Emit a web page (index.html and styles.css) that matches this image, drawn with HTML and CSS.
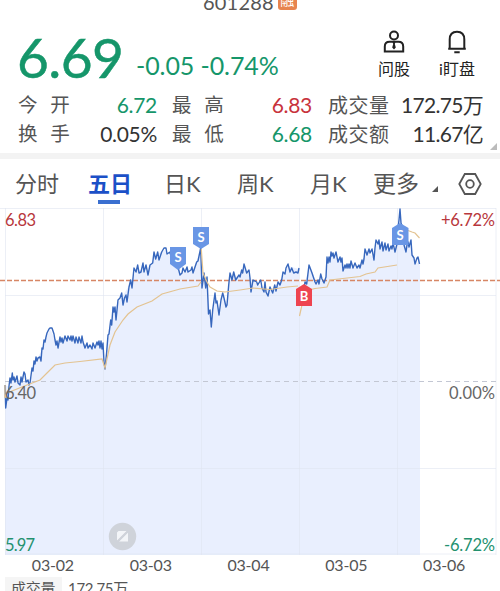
FILE: index.html
```
<!doctype html>
<html lang="zh-CN">
	<head>
		<title>601288</title>
		<meta charset="utf-8"/>
		<link rel="stylesheet" href="styles.css">
	</head>
	<body>

		<header class="code"><span>601288</span><i class="tag">融</i></header>

		<section class="summary">
			<span class="price">6.69</span>
			<span class="change">-0.05 -0.74%</span>
			<div class="action ask">
				<svg width="24" height="24" viewBox="0 0 24 24">
					<circle cx="12" cy="5.5" r="4"/>
					<path d="M2.8 21.5V16.5Q2.8 11.8 7.5 11.8H16.5Q21.2 11.8 21.2 16.5V21.5Z"/>
					<path class="solid" d="M10.5 12H13.5L12.8 14L13.8 17.5L12 19.5L10.2 17.5L11.2 14Z"/>
				</svg>
				<span>问股</span>
			</div>
			<div class="action watch">
				<svg width="24" height="24" viewBox="0 0 24 24">
					<path d="M4.7 18.8V9.5Q4.7 1.7 12 1.7T19.3 9.5V18.8M3.2 18.8H20.8M9.3 22.3H14.7"/>
				</svg>
				<span>i盯盘</span>
			</div>
		</section>

		<section class="quotes">
			<span>今&nbsp;开</span><b class="down">6.72</b>
			<span>最&nbsp;高</span><b class="up">6.83</b>
			<span class="tight">成交量</span><b>172.75万</b>
			<span>换&nbsp;手</span><b>0.05%</b>
			<span>最&nbsp;低</span><b class="down">6.68</b>
			<span class="tight">成交额</span><b>11.67亿</b>
			<i class="corner"></i>
		</section>

		<nav class="tabs">
			<span>分时</span>
			<span class="active">五日</span>
			<span>日K</span>
			<span>周K</span>
			<span>月K</span>
			<span>更多</span>
			<i class="corner"></i>
			<svg width="24" height="24" viewBox="0 0 24 24">
				<path d="M6.8 2H17.2L22.7 12L17.2 22H6.8L1.3 12Z"/>
				<circle cx="12" cy="12" r="3.8"/>
			</svg>
		</nav>

		<!-- y axis starts at 208 -->
		<svg class="chart" width="500" height="347" viewBox="0 208 500 347">
			<path class="area" d="M5 555V385L9 387L13 378L30 383L34 364L42 350L50 329L58 345L65 339L82 340L86 346L103 345L104.5 366L108 335L114 309L122 297L130 284L137 269L148 272L154 256L165 250L170 256L175 260L180 275L187 270L193 271L200.7 248L203 280L207 280L211 325L215 293L220 313L223 295L226.7 305L230 275L238 277L244 266L250 278L257 284L270 291L279 282L288 266L299 269L299.5 316L305 282L310 265L316 282L325 280L329 258L333 254L342 262L344 268L360 267L367 252L374 258L377 241L384 246L395 250L400 209L404 245L410 242L414 260L420 265V555Z"/>
			<path class="grid" d="M0 208.5H496M5 295.5H496M5 468.5H496M5 554H496M5.500 208V555M103.500 208V555M201.500 208V555M299.500 208V555M397.500 208V555M496 208V555"/>
			<path class="zero" d="M5 381.500H496"/>
			<path class="cost" d="M0 280.500H500"/>

			<path class="line" d="M5 385L5.700 408L7 398L8 400L9 386L10 378L11 383L12.300 373L13 380L14 377L15 382L16 379L17 376L18 383L20 385L21 377L22 382L24 372L25 374L26 382L28 380L29 385L30 383L32 368L33 371L34 361L35 364L36 357L37 361L38 358L40 357L41 361L42 348L43 349L44 340L45 342L46 337L47 333L49 329L50 328H52L54 334L55 340L56 345L57 341L58 348L60 337L61 342L62 338L63 343L65 336L67 341L68 336L70 340L71 336L72 341L73 336L75 343L76 337L78 343L79 337L81 343L82 336L83 342L85 348L87 343L88 348L90 345L92 349L93 343L95 348L97 342L98 345L99 341L100 348L101 341L102 349L103 343L104 362L105 369L106.500 354L108 335L109 334L110.700 320L111.700 325L113 307L114 312L115 307L116 320L118 300L120 298L121.700 293L123 305L124.500 298L126 295L127 302L129 287L130.700 280L132 288L134 268L136 272L137.700 265L139 273L141 272L143 263L144 272L146 265L148 275L150 265L152.700 263L154 252L155.700 259L157.700 252L159 260L161.700 252L164 248H166L167 254L170 252L172 262L175 257L177 263L180 275L182 273L183 268L185 272L187 267L188 272L191 270L192 267L193 273L196.700 262L198 261L200.700 248L202 288L204 273L205.700 288L207 277L208.500 314L210 310L211.300 327L212.700 310L215 293L216 303L217 301L219 315L221 300L222.700 293L224 298L226 307L227 305L228.700 285L230 273L232 280L233.700 272L235.700 280L239 275L240 277L241.700 270L242.700 273L244 264L246.700 273L249 270L250 278L251 292L253 280L256.700 282L257.700 285L260.700 280L262 288L264 292L265 282L266 292L268 296L270 287L272.700 293L274.700 285L276 291L278 282L280 285L281.700 280L283 272L285 274L286 268L288 264L290 272L291.700 268L293.700 273L296 272L298 273L299 268"/>
			<path class="line" d="M302 302L305 282L306.700 284L309 265L312 273L315 282L316 284L318 280L319 284L320.700 274L322 279L324 283L326 277L327 257L328 263L329 257L330 262L331 252L332 256L333 253L334 258L336 252L338 262L340 257L341 262L342 258L343 271L345 265L346 268L347 264L348 268L349 264L350 268L351 261L353 268L355 263L357 268L359 265L360 268L362 260L363 264L364 259L365 249L367 255L369 249L370 253L372 249L374 260L375 248L376 240L378 244L379 240L380 249L382 242L383 251L385 243L386 250L388 244L389 251L391 246L392 249L393 243L395 252L397 244L398 228L399 220L400 209L401 223L403 228L404 245L406 252L407 245L408 242L409 247L411 240L412 255L414 258L415 264L417 258L418 257L419.500 264"/>
			<path class="average" d="M5 385V398L7 393L27 385L40 380L47 373L55 365L65 363L80 361.500L102 359L105 368L110 345L115 332L123 320L128 314L137 307L152 301L162 294L180 289L198 286L201 282M201.300 249L203 273L207 282L210 287L217 291L225 292L240 290L253 288L270 289.500L287 287L298 286M299.500 316L303 300L309 290L315 288.500L327 287L330 280L360 276.500L366 274L375 272L378 268L397 265"/>
			<path class="average" d="M408 230.500L412 232L415 233L419.500 238"/>

			<g class="marker sell"><path d="M170 247H186V264L178 270L170 264Z"/><text x="178" y="262">S</text></g>
			<g class="marker sell"><path d="M193 227H209V244L201 249L193 244Z"/><text x="201" y="242">S</text></g>
			<g class="marker sell"><path d="M400 223L408.500 228V245H392V228Z"/><text x="400" y="240">S</text></g>
			<g class="marker buy"><path d="M304 284L312 289V306H296V289Z"/><text x="304" y="301">B</text></g>

			<g class="axis">
				<text class="up" x="5" y="226" textLength="31">6.83</text>
				<text x="5" y="399" textLength="31">6.40</text>
				<text class="down" x="5" y="551" textLength="30">5.97</text>
				<text class="up" x="441" y="226" textLength="54">+6.72%</text>
				<text x="449" y="399" textLength="46">0.00%</text>
				<text class="down" x="444" y="551" textLength="51">-6.72%</text>
			</g>

			<g class="expand">
				<circle cx="122.500" cy="536.500" r="13.700"/>
				<path d="M118.500 531H127L117 541V532.500ZM128 532.500V541.500H119Z"/>
				<path class="slash" d="M116.500 542.500L128.500 530.500"/>
			</g>
		</svg>

		<div class="dates">
			<span>03-02</span><span>03-03</span><span>03-04</span><span>03-05</span><span>03-06</span>
		</div>

		<footer class="volume"><span>成交量</span><b>172.75万</b></footer>

	</body>
</html>
```

FILE: styles.css
```
* { box-sizing: border-box; }

body {
	margin: 0;
	width: 500px;
	height: 591px;
	overflow: hidden;
	background: #fff;
	color: #555;
	font-family: Lato, "Noto Sans CJK SC", sans-serif;
}

b, i { font-weight: normal; font-style: normal; }

svg { display: block; fill: none; }

.up { color: #c8323c; fill: #b8373c; }
.down { color: #15966a; fill: #23916f; }

.code {
	height: 28px;
	padding-left: 203px;
	display: flex;
	gap: 4px;
	font-size: 20px;
	line-height: 24px;
	letter-spacing: .2px;
}
.code span { margin-top: -10px; }

.tag {
	width: 19px;
	height: 20px;
	margin-top: -10px;
	border-radius: 3px;
	background: #e7844f;
	color: #fff;
	font-size: 14px;
	line-height: 20px;
	text-align: center;
}

.summary {
	height: 63px;
	padding-left: 17px;
	display: flex;
	color: #15966a;
}

.price {
	width: 119px;
	margin-top: -1px;
	font-size: 55px;
	line-height: 60px;
	letter-spacing: -.6px;
	-webkit-text-stroke: .5px;
}

.change {
	width: 234px;
	padding-top: 20px;
	font-size: 25px;
	line-height: 34px;
	letter-spacing: -.1px;
	white-space: nowrap;
}

.action {
	width: 48px;
	padding-top: 2px;
	display: flex;
	flex-direction: column;
	align-items: center;
	color: #222;
	font-size: 16px;
	line-height: 24px;
	white-space: nowrap;
}
.action svg { stroke: #222; stroke-width: 2; }
.action .solid { fill: #222; stroke: none; }
.action span { margin-top: 3px; }
.watch { margin-left: 15px; }

.quotes {
	height: 68px;
	padding: 0 17px 0 18px;
	display: grid;
	grid-template-columns: 69px 70px 15px 69px 71px 16px 70px 1fr;
	grid-template-rows: 29px 29px;
	font-size: 21px;
	line-height: 28px;
	position: relative;
	border-bottom: 6px solid #f3f3f3;
}
.quotes span { font-size: 19.500px; letter-spacing: 3.900px; white-space: nowrap; }
.quotes .tight { font-size: 20px; letter-spacing: .5px; }
.quotes b { text-align: right; white-space: nowrap; letter-spacing: -.3px; }
.quotes b:not(.up, .down) { color: #333; }
.quotes .tight + b { letter-spacing: -.7px; }
.quotes span:nth-of-type(3n+1) { grid-column: 1; }
.quotes span:nth-of-type(3n+2) { grid-column: 4; }
.quotes span:nth-of-type(3n) { grid-column: 7; }
.quotes span:nth-of-type(3n+2) + b { grid-column: 5; }

.corner {
	width: 7px;
	height: 7px;
	background: #555;
	clip-path: polygon(100% 0, 100% 100%, 0 100%);
}
.quotes .corner { position: absolute; right: 3px; bottom: 3px; background: #bbb; }

.tabs {
	height: 49px;
	padding-left: 15px;
	display: flex;
	font-size: 22px;
	line-height: 49px;
}
.tabs span { flex: 0 0 73px; white-space: nowrap; }
.tabs span:nth-child(2) { flex-basis: 76px; }
.tabs span:nth-child(5) { flex-basis: 63px; }
.tabs span:nth-child(6) { flex-basis: 58px; font-size: 23px; }
.tabs .active {
	color: #1b50c7;
	font-weight: bold;
	background: linear-gradient(#3a6fd0, #3a6fd0) 10px 41px / 22px 4px no-repeat;
}
.tabs .corner { margin: 27px 20px 0 1px; width: 6px; height: 6px; }
.tabs svg { margin-top: 13px; stroke: #555; stroke-width: 1.800; }

.area { fill: #e9effe; }
.grid { stroke: #dfe4f0; stroke-opacity: .6; }
.zero { stroke: #c3c7d3; stroke-dasharray: 5 4; }
.cost { stroke: #d78665; stroke-width: 1.500; stroke-dasharray: 5 2; }
.average { stroke: #e3c391; stroke-width: 1.200; }
.line { stroke: #3767bd; stroke-width: 1.400; stroke-linejoin: round; }

.marker text {
	fill: #fff;
	font-size: 13px;
	font-weight: bold;
	text-anchor: middle;
}
.sell path { fill: #6996e5; }
.buy path { fill: #ee4450; }

.axis { font-size: 16.500px; }
.axis text:not(.up, .down) { fill: #666; }

.expand circle { fill: #cfd3da; }
.expand path { fill: #f3f5f8; }
.expand .slash { stroke: #cfd3da; stroke-width: 2; }

.dates {
	height: 22px;
	padding-left: 4px;
	display: grid;
	grid-template-columns: repeat(5, 97.800px);
	text-align: center;
	font-size: 16px;
	line-height: 20px;
	letter-spacing: -.2px;
}

.volume {
	height: 24px;
	margin-left: 5px;
	display: flex;
	gap: 6px;
	font-size: 15px;
	line-height: 23px;
	letter-spacing: -.3px;
}
.volume span { width: 57px; padding-left: 6px; background: #f5f5f5; }
```
